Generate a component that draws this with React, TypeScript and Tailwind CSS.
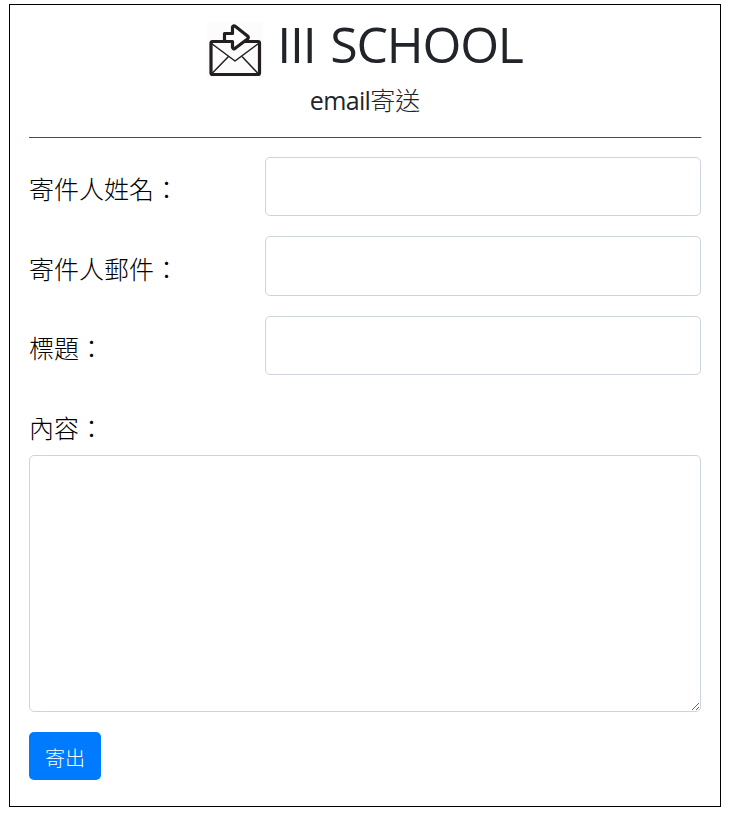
import React from "react";

function MailIcon() {
  return (
    <svg className="shrink-0" width="56" height="56" viewBox="0 0 56 56" fill="none" stroke="#231f20" strokeWidth="3.2" strokeLinejoin="round" strokeLinecap="round">
      <rect width="56" height="56" fill="#fcfcfc" stroke="none" />
      <g transform="translate(0.5 0)">
        <path d="M4 21.500 27.500 39 51 21.500M4 52 20.500 35M51 52 35 35" strokeWidth="1.5" />
        <rect x="3.500" y="19.500" width="48.500" height="33" rx="1.5" />
        <path d="M17 19.500V11.500H25V5Q26 3 28 4.500L40 14Q41.500 15.500 40 17L28 26Q26 28 25 25.500V19.500Z" fill="#fff" />
      </g>
    </svg>
  );
}

const fields = ["寄件人姓名：", "寄件人郵件：", "標題："];

export default function App() {
  return (
    <div className="h-[818px] w-[735px] bg-white pt-1 pl-[9px] font-['Open_Sans','Noto_Sans_CJK_TC',sans-serif] text-[#212529]">
      <main className="h-[803px] w-[712px] border border-black px-[19px] pt-[17px]">
        <header className="flex h-[115px] flex-col items-center">
          <h1 className="flex h-[59px] items-start gap-[14px] text-[50px] leading-[44px] tracking-[-1.2px] [word-spacing:3px] whitespace-nowrap"><MailIcon />III SCHOOL</h1>
          <p className="pt-[1px] text-[25px] leading-9 font-light"><span className="font-normal tracking-[-0.65px]">email</span>寄送</p>
        </header>
        <hr className="border-[#ff0000]" />
        <form className="pt-[19px]">
          {fields.map((label) => (
            <label key={label} className="mb-[20.200px] flex h-[59.300px] items-center text-[25px] font-light text-black">
              <span className="w-[236px] pt-[7px]">{label}</span>
              <input className="h-full w-[436px] rounded-[5px] border border-[#ced4da]" />
            </label>
          ))}
          <label className="block h-[60px] pt-[10px] text-[25px] leading-[46px] font-light text-black">內容：</label>
          <textarea className="block h-[257px] w-full rounded-[5px] border border-[#ced4da]" />
          <button type="button" className="mt-5 h-12 w-[72px] rounded-[5px] bg-[#007bff] pt-[6px] text-xl font-light text-white">寄出</button>
        </form>
      </main>
    </div>
  );
}
